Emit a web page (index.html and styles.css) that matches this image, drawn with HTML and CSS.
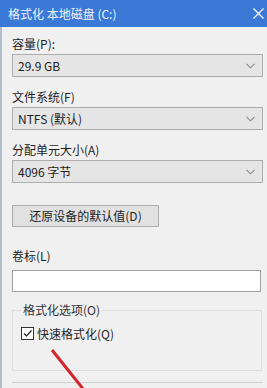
FILE: index.html
```html
<!DOCTYPE html>
<html lang="zh-CN">
<head>
    <meta charset="UTF-8">
    <meta name="viewport" content="width=device-width, initial-scale=1.0">
    <title>格式化 本地磁盘 (C:)</title>
    <link rel="stylesheet" href="styles.css">
</head>
<body>
    <div class="window">
        <div class="titlebar">
            <div class="title">格式化 本地磁盘 (C:)</div>
            <div class="close">
                <svg width="11" height="11" viewBox="0 0 11 11">
                    <path d="M0.5 0.5 L10.5 10.5 M10.5 0.5 L0.5 10.5" stroke="#ffffff" stroke-width="1.2" fill="none"/>
                </svg>
            </div>
        </div>

        <div class="content">
            <div class="field">
                <div class="label">容量(P):</div>
                <div class="combo">
                    <span>29.9 GB</span>
                    <svg class="arrow" width="9" height="6" viewBox="0 0 9 6"><path d="M0.5 0.8 L4.5 4.8 L8.5 0.8" stroke="#888" stroke-width="1.1" fill="none"/></svg>
                </div>
            </div>

            <div class="field">
                <div class="label">文件系统(F)</div>
                <div class="combo">
                    <span>NTFS (默认)</span>
                    <svg class="arrow" width="9" height="6" viewBox="0 0 9 6"><path d="M0.5 0.8 L4.5 4.8 L8.5 0.8" stroke="#888" stroke-width="1.1" fill="none"/></svg>
                </div>
            </div>

            <div class="field">
                <div class="label">分配单元大小(A)</div>
                <div class="combo">
                    <span>4096 字节</span>
                    <svg class="arrow" width="9" height="6" viewBox="0 0 9 6"><path d="M0.5 0.8 L4.5 4.8 L8.5 0.8" stroke="#888" stroke-width="1.1" fill="none"/></svg>
                </div>
            </div>

            <div class="restore">还原设备的默认值(D)</div>

            <div class="label volume-label">卷标(L)</div>
            <div class="textbox"></div>

            <fieldset class="options">
                <legend>格式化选项(O)</legend>
                <div class="check-row">
                    <span class="checkbox">
                        <svg width="11" height="11" viewBox="0 0 11 11"><path d="M2 5.5 L4.5 8 L9.5 2.5" stroke="#222" stroke-width="1.2" fill="none"/></svg>
                    </span>
                    <span>快速格式化(Q)</span>
                </div>
            </fieldset>

            <div class="bottom-line"></div>
        </div>

        <!-- 红色标注箭头 -->
        <svg class="annotation" width="267" height="388" viewBox="0 0 267 388">
            <line x1="52" y1="350" x2="84" y2="390" stroke="#d5232b" stroke-width="3"/>
        </svg>
    </div>
</body>
</html>
```

FILE: styles.css
```css
body {
    margin: 0;
    background-color: #f0f0f0;
    font-family: 'Noto Sans CJK SC', 'Liberation Sans', sans-serif;
    font-size: 12px;
    color: #1e1e1e;
}

.window {
    position: relative;
    width: 267px;
    height: 388px;
    overflow: hidden;
    background-color: #f0f0f0;
}

.titlebar {
    height: 27px;
    background-color: #3a79d5;
    display: flex;
    align-items: center;
    justify-content: space-between;
    padding: 0 2px 0 8px;
}

.title {
    color: #eef3fb;
    font-size: 12px;
}

.close {
    display: flex;
    align-items: center;
    padding-right: 1px;
}

.content {
    border-left: 2px solid #b4bfcd;
    height: 361px;
    padding: 9px 4px 0 10px;
}

.field {
    margin-bottom: 12px;
}

.label {
    height: 16px;
    line-height: 16px;
}

.combo {
    margin-top: 2px;
    height: 21px;
    background-color: #e5e5e5;
    border: 1px solid #adadad;
    display: flex;
    align-items: center;
    justify-content: space-between;
    padding: 0 7px 0 5px;
}

.arrow {
    margin-top: 1px;
}

.restore {
    margin-top: 22px;
    width: 145px;
    height: 20px;
    line-height: 20px;
    text-align: center;
    background-color: #e1e1e1;
    border: 1px solid #adadad;
}

.volume-label {
    margin-top: 21px;
}

.textbox {
    margin-top: 6px;
    margin-right: 2px;
    height: 20px;
    background-color: #ffffff;
    border: 1px solid #a0a0a0;
}

.options {
    box-sizing: border-box;
    margin: 10px 1px 0 0;
    padding: 7px 8px 0 8px;
    height: 69px;
    border: 1px solid #dcdcdc;
}

.options legend {
    padding: 0 2px;
    line-height: 16px;
    color: #333;
}

.check-row {
    display: flex;
    align-items: center;
    gap: 3px;
}

.checkbox {
    width: 11px;
    height: 11px;
    border: 1px solid #333;
    background-color: #ffffff;
    display: flex;
}

.bottom-line {
    margin-top: 11px;
    border-top: 1px solid #d0d0d0;
}

.annotation {
    position: absolute;
    left: 0;
    top: 0;
    z-index: 2;
    pointer-events: none;
}
```
